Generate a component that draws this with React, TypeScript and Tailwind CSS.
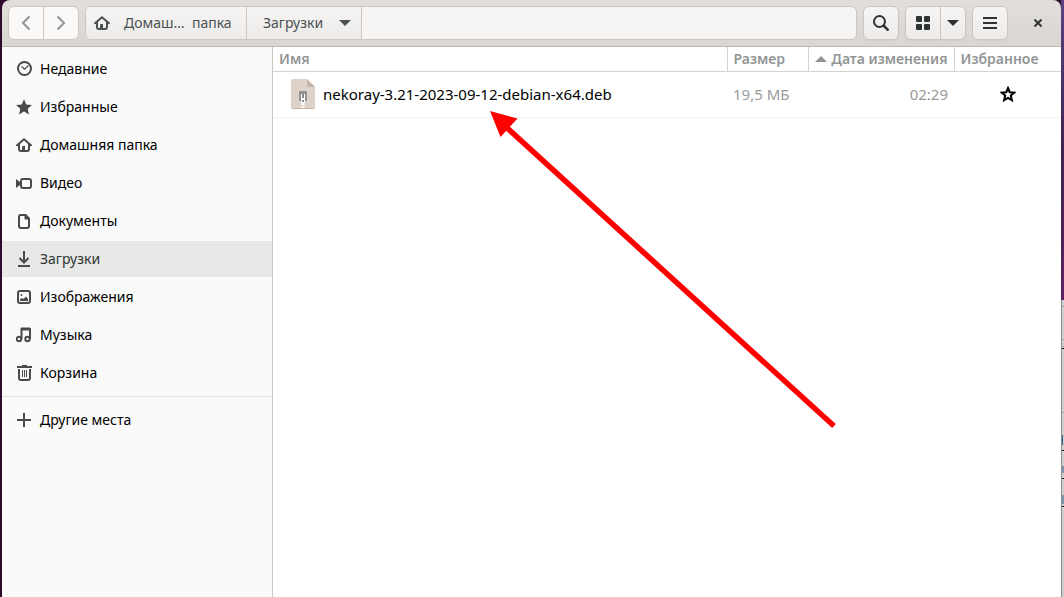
import type { ReactNode } from "react";

const Icon = ({ children, className = "" }: { children: ReactNode; className?: string }) => (
  <svg
    viewBox="0 0 16 16"
    className={`size-4 shrink-0 ${className}`}
    fill="none"
    stroke="currentColor"
    strokeWidth="2"
    aria-hidden="true"
  >
    {children}
  </svg>
);

const HomeIcon = ({ className = "" }: { className?: string }) => (
  <Icon className={className}>
    <path d="M1 8.200 8 2.300l7 5.900" strokeLinejoin="round" strokeLinecap="round" />
    <path d="M3 7v5q0 2 2 2h6q2 0 2-2V7" />
    <path d="M6 14v-4q0-1 1-1h2v5z" fill="currentColor" stroke="none" />
  </Icon>
);

const ArrowDown = () => (
  <svg viewBox="0 0 12 6" className="h-1.5 w-3 shrink-0" fill="currentColor" aria-hidden="true">
    <path d="M0 0h12L6 6z" />
  </svg>
);

const places = [
  {
    name: "Недавние",
    icon: (
      <Icon>
        <circle cx="8.500" cy="7.500" r="6.500" />
        <path d="m5.500 5.500 3 2.800 4-3.800" strokeWidth="1.200" />
      </Icon>
    ),
  },
  {
    name: "Избранные",
    icon: (
      <Icon>
        <path
          d="m8 .2 2.200 5.200 5.800.5-4.300 3.800 1.300 5.800L8 12.400l-5 3.100 1.300-5.800L0 5.900l5.800-.5z"
          fill="currentColor"
          stroke="none"
        />
      </Icon>
    ),
  },
  { name: "Домашняя папка", icon: <HomeIcon /> },
  {
    name: "Видео",
    icon: (
      <Icon>
        <rect x="5" y="4" width="10" height="9" rx="2" />
        <path d="M0 4v9l4-3V7z" fill="currentColor" stroke="none" />
      </Icon>
    ),
  },
  {
    name: "Документы",
    icon: (
      <Icon>
        <path d="M5 2h4.500L13 5.500V13q0 2-2 2H5q-2 0-2-2V4q0-2 2-2z" />
        <path d="M9 2v4h4z" fill="currentColor" strokeWidth="1" />
      </Icon>
    ),
  },
  {
    name: "Загрузки",
    icon: (
      <Icon>
        <path d="M8 0v11M3.500 7 8 11.500 12.500 7M2 15h12" />
      </Icon>
    ),
  },
  {
    name: "Изображения",
    icon: (
      <Icon>
        <rect x="2" y="2" width="12" height="12" rx="2" />
        <path d="m4 12 .2-2 1.800-1 1.500 1L10 7.500l2 2.500v2z" fill="currentColor" stroke="none" />
        <circle cx="5.500" cy="6" r="1" fill="currentColor" stroke="none" />
      </Icon>
    ),
  },
  {
    name: "Музыка",
    icon: (
      <Icon>
        <circle cx="3" cy="12" r="2.200" />
        <circle cx="11.500" cy="12" r="2.200" />
        <path d="M5.500 12V2H14v10" />
        <path d="M5 2h9" strokeWidth="3" />
      </Icon>
    ),
  },
  {
    name: "Корзина",
    icon: (
      <Icon>
        <path d="M1 2h15M6 1h5" />
        <path d="M3 4v9q0 2 2 2h7q2 0 2-2V4" />
        <path d="M6.500 5v7M8.500 5v7M10.500 5v7" strokeWidth="1" />
      </Icon>
    ),
  },
];

const button =
  "flex h-[34px] items-center justify-center border border-[#cdc7c2] bg-linear-to-b from-[#f6f5f4] to-[#edebe9] text-[#2e3436] shadow-xs";

const Header = () => (
  <header className="flex h-[47px] items-center rounded-t-lg border-b border-[#bfb8b1] bg-linear-to-b from-[#e1dedb] to-[#dad6d2] pr-[9px] pl-1.5">
    <div className="flex">
      <button aria-label="Назад" className="flex h-[34px] w-9 items-center justify-center rounded-l-md border border-[#cdc7c2] bg-[#faf9f8] text-[#929595]">
        <Icon>
          <path d="M11.500 1.500 5 8l6.500 6.500" />
        </Icon>
      </button>
      <button aria-label="Вперёд" className="flex h-[34px] w-[35px] items-center justify-center rounded-r-md border border-l-0 border-[#cdc7c2] bg-[#faf9f8] text-[#929595]">
        <Icon>
          <path d="M4.500 1.500 11 8l-6.500 6.500" />
        </Icon>
      </button>
    </div>
    <nav className="ml-1.5 flex h-[34px] flex-1 overflow-hidden rounded-md border border-[#cdc7c2] bg-[#f6f5f4] text-[#4a5153]">
      <button className="flex w-[161px] items-center gap-3.5 border-r border-[#cdc7c2] bg-linear-to-b from-[#f6f5f4] to-[#edebe9] px-2">
        <HomeIcon />
        <span className="whitespace-pre">Домаш…  папка</span>
      </button>
      <button className="flex w-[115px] items-center justify-between border-r border-[#cdc7c2] bg-linear-to-b from-[#f6f5f4] to-[#edebe9] pr-2.5 pl-4">
        Загрузки
        <ArrowDown />
      </button>
    </nav>
    <button aria-label="Поиск" className={`${button} ml-1.5 w-9 rounded-md`}>
      <Icon>
        <circle cx="6.500" cy="6.500" r="5.500" />
        <path d="m10.500 10.500 5 5" strokeWidth="2.500" />
      </Icon>
    </button>
    <div className="ml-1.5 flex">
      <button aria-label="Значки" className={`${button} w-9 rounded-l-md`}>
        <svg viewBox="0 0 14 14" className="size-3.5" fill="currentColor" aria-hidden="true">
          <rect width="6" height="6" rx="1" />
          <rect x="8" width="6" height="6" rx="1" />
          <rect y="8" width="6" height="6" rx="1" />
          <rect x="8" y="8" width="6" height="6" rx="1" />
        </svg>
      </button>
      <button aria-label="Параметры вида" className={`${button} w-[25px] rounded-r-md border-l-0`}>
        <ArrowDown />
      </button>
    </div>
    <button aria-label="Меню" className={`${button} ml-1.5 w-9 rounded-md`}>
      <Icon>
        <path d="M1 3h14M1 8h14M1 13h14" />
      </Icon>
    </button>
    <button aria-label="Закрыть" className="ml-4 flex size-7 items-center justify-center text-[#2e3436]">
      <svg viewBox="0 0 8 8" className="size-2" stroke="currentColor" strokeWidth="2" aria-hidden="true">
        <path d="m.5.5 7 7M7.500.5l-7 7" />
      </svg>
    </button>
  </header>
);

const Sidebar = () => (
  <aside className="w-[271px] shrink-0 border-r border-[#cdc7c2] bg-[#fafafa] pt-1 text-black">
    <ul className="flex flex-col gap-0.5">
      {places.map((place) => {
        const active = place.name === "Загрузки";
        return (
          <li key={place.name}>
            <a
              href="#"
              className={`flex h-9 items-center gap-2 px-3.5 ${active ? "bg-[#e8e8e6] text-[#2e3436]" : ""}`}
            >
              <span className="text-[#4a4a4a]">{place.icon}</span>
              {place.name}
            </a>
          </li>
        );
      })}
    </ul>
    <div className="mt-[5px] border-t border-[#dfdfdd] pt-[5px]">
      <a href="#" className="flex h-9 items-center gap-2 px-3.5">
        <Icon className="text-[#4a4a4a]">
          <path d="M8 1v14M1 8h14" />
        </Icon>
        Другие места
      </a>
    </div>
  </aside>
);

const DebFile = () => (
  <svg viewBox="0 0 24 30" className="h-[30px] w-6 shrink-0" aria-hidden="true">
    <path d="M2 0h14l8 8v20q0 2-2 2H2q-2 0-2-2V2q0-2 2-2z" fill="#ded3ca" />
    <path d="M16 0v6q0 2 2 2h6z" fill="#c6b5a6" />
    <path d="M0 27.500V28q0 2 2 2h20q2 0 2-2v-.5q0 1.500-2 1.500H2q-2 0-2-1.500z" fill="#c6b5a6" />
    <path d="M9 12h6q1 0 1 1v9h-2v-6h-4v6H8v-9q0-1 1-1z" fill="#949494" />
    <path d="M10 15h4v8q0 2-2 2t-2-2z" fill="#fff" />
    <path d="M11 14h2v5h-2z" fill="#8a8a8a" />
    <path d="M11 21h2v2h-2z" fill="#8a8a8a" />
    <path d="M12 25v5" stroke="#fff" strokeWidth="3" strokeDasharray="1.500 1" />
  </svg>
);

const FileList = () => (
  <main className="min-w-0 flex-1 bg-white">
    <table className="w-full table-fixed">
      <colgroup>
        <col />
        <col className="w-[81px]" />
        <col className="w-[146px]" />
        <col className="w-[107px]" />
      </colgroup>
      <thead>
        <tr className="h-6 border-b border-[#d5d2cf] text-left text-[#929595]">
          <th className="px-1.5 font-semibold">Имя</th>
          <th className="border-l border-[#d5d2cf] px-1.5 font-semibold">Размер</th>
          <th className="border-l border-[#d5d2cf] px-1.5 font-semibold">
            <span className="flex items-center justify-end gap-1 whitespace-nowrap">
              <svg viewBox="0 0 12 6" className="h-1.5 w-3 shrink-0" fill="currentColor" aria-hidden="true">
                <path d="M0 6h12L6 0z" />
              </svg>
              Дата изменения
            </span>
          </th>
          <th className="border-l border-[#d5d2cf] px-1.5 font-semibold">Избранное</th>
        </tr>
      </thead>
      <tbody>
        <tr className="h-[46px] border-b border-[#f3f3f3] text-[15px] text-[#999b9b]">
          <td className="pl-[18px] text-black">
            <div className="flex items-center gap-2">
              <DebFile />
              <span className="whitespace-nowrap">nekoray-3.21-2023-09-12-debian-x64.deb</span>
            </div>
          </td>
          <td className="px-1.5 whitespace-nowrap">19,5 МБ</td>
          <td className="px-1.5 text-right">02:29</td>
          <td>
            <button aria-label="В избранное" className="mx-auto block text-black">
              <Icon>
                <path d="m8 2 1.700 4.200 4.600.4-3.500 3 1.100 4.600L8 11.800l-3.900 2.400 1.100-4.600-3.500-3 4.600-.4z" />
              </Icon>
            </button>
          </td>
        </tr>
      </tbody>
    </table>
  </main>
);

// the sliver of desktop that shows to the right of the window
const Desktop = () => (
  <div className="flex w-[3px] shrink-0 flex-col">
    <div className="h-[300px] bg-linear-to-b from-[#5b4283] via-[#3d2450] to-[#5e2160]" />
    <div className="flex-1 border-l border-[#8c8c8c] bg-[#cfcfcf]">
      <svg viewBox="0 0 2 240" className="h-60 w-0.5" aria-hidden="true">
        <path d="M0 6.500h2M0 39.500h2M0 46.500h2M0 112.500h2" stroke="#a6a6a6" />
        <path d="M0 48.500h2M0 150.500h2M0 178.500h2M0 206.500h2" stroke="#111" />
        <path d="M.5 135v10M1 166v7M1 195v9" stroke="#2d5f8a" />
      </svg>
    </div>
  </div>
);

const App = () => {
  return (
    <div className="relative flex min-h-screen bg-[#300a2c] font-['Noto_Sans',sans-serif] text-[14px] leading-5">
      <div className="ml-0.5 flex min-w-0 flex-1 flex-col">
        <Header />
        <div className="flex flex-1">
          <Sidebar />
          <FileList />
        </div>
      </div>
      <Desktop />
      <svg
        viewBox="0 0 350 320"
        className="pointer-events-none absolute top-[110px] left-[488px] h-80 w-[350px]"
        aria-hidden="true"
      >
        <path d="M18 17 346 316" stroke="#f00" strokeWidth="5.500" />
        <path d="m2 1 27.500 7.500L12.500 27z" fill="#f00" />
      </svg>
    </div>
  );
};

export default App;
